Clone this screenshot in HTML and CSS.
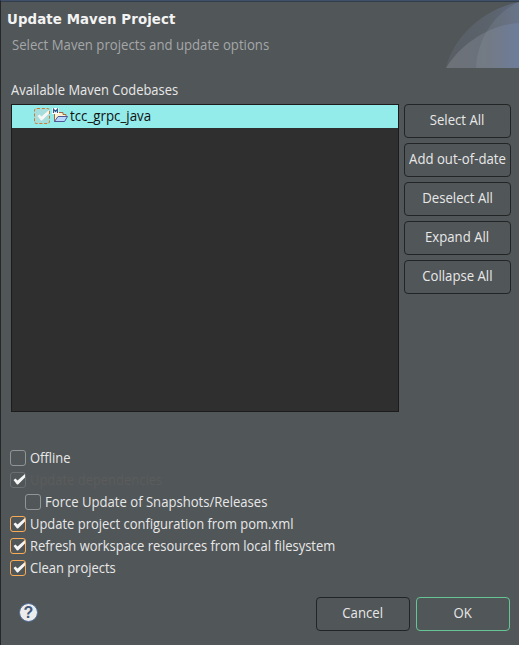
FILE: index.html
```html
<!DOCTYPE html>
<html lang="en">
<head>
<meta charset="utf-8">
<title>Update Maven Project</title>
<link rel="stylesheet" href="styles.css">
</head>
<body>
<main class="dialog">
  <header class="header">
    <div>
      <h1>Update Maven Project</h1>
      <p class="t sub">Select Maven projects and update options</p>
    </div>
    <svg class="banner" width="73" height="66" viewBox="0 0 73 66">
      <defs>
        <linearGradient id="fade" x1="0" x2="1"><stop offset="0" stop-color="#697180" stop-opacity=".3"/><stop offset=".6" stop-color="#6a7589" stop-opacity=".4"/><stop offset="1" stop-color="#6c7fab" stop-opacity=".5"/></linearGradient>
        <linearGradient id="lower" x1="0" x2="1"><stop offset="0" stop-color="#888b91" stop-opacity=".45"/><stop offset=".6" stop-color="#828896" stop-opacity=".4"/><stop offset="1" stop-color="#6f84b5" stop-opacity=".4"/></linearGradient>
      </defs>
      <path fill="url(#fade)" d="M0 66C7 35 37 7 73 0V66Z"/>
      <path fill="url(#lower)" d="M0 66C15 42 43 23 73 21V66Z"/>
      <path fill="#a2adbb" fill-opacity=".15" d="M30 66C31 38 48 11 73 0V66Z"/>
    </svg>
  </header>
  <p class="t label">Available Maven Codebases</p>
  <section class="projects">
    <div class="tree">
      <div class="row">
        <span class="check focus"><svg viewBox="0 0 16 16"><path d="M3.5 8 5.5 6.5 7.5 8.5 15 2V5.5L8 12.5H7Z"/></svg></span>
        <svg class="folder" width="17" height="16" viewBox="0 0 17 16">
          <path d="M2.5 14V5.5H6L7 4.5H11V6.5H14V9" fill="#fff4cf" stroke="#a36742"/>
          <path d="M2.5 13.5 6 8.5H15.5L12.5 13.5Z" fill="#bad8ff" stroke="#4e5797"/>
          <path d="M0 0H7V6H0Z" fill="#fff"/>
          <path d="M1.5 5V1.2L3.5 3.5 5.5 1.2V5" fill="none" stroke="#315b8a" stroke-width="1.2"/>
        </svg>
        <span class="t">tcc_grpc_java</span>
      </div>
    </div>
    <div class="actions">
      <button><span class="t">Select All</span></button>
      <button><span class="t">Add out-of-date</span></button>
      <button><span class="t">Deselect All</span></button>
      <button><span class="t">Expand All</span></button>
      <button><span class="t">Collapse All</span></button>
    </div>
  </section>
  <section class="options">
    <div class="option"><span class="check"></span><span class="t">Offline</span></div>
    <div class="option disabled"><span class="check"><svg viewBox="0 0 16 16"><path d="M3.5 8 5.5 6.5 7.5 8.5 15 2V5.5L8 12.5H7Z"/></svg></span><span class="t">Update dependencies</span></div>
    <div class="option nested"><span class="check"></span><span class="t">Force Update of Snapshots/Releases</span></div>
    <div class="option on"><span class="check"><svg viewBox="0 0 16 16"><path d="M3.5 8 5.5 6.5 7.5 8.5 15 2V5.5L8 12.5H7Z"/></svg></span><span class="t">Update project configuration from pom.xml</span></div>
    <div class="option on"><span class="check"><svg viewBox="0 0 16 16"><path d="M3.5 8 5.5 6.5 7.5 8.5 15 2V5.5L8 12.5H7Z"/></svg></span><span class="t">Refresh workspace resources from local filesystem</span></div>
    <div class="option on"><span class="check"><svg viewBox="0 0 16 16"><path d="M3.5 8 5.5 6.5 7.5 8.5 15 2V5.5L8 12.5H7Z"/></svg></span><span class="t">Clean projects</span></div>
  </section>
  <footer class="footer">
    <span class="help">?</span>
    <button><span class="t">Cancel</span></button>
    <button class="primary"><span class="t">OK</span></button>
  </footer>
</main>
</body>
</html>
```
FILE: styles.css
```css
* { box-sizing: border-box; }
body { margin: 0; background: #515658; color: #e8e8e8; font: 14px/20px "Open Sans", sans-serif; }
.dialog { width: 519px; height: 645px; border-top: 1px solid #40506a; border-left: 1px solid #252729; display: flex; flex-direction: column; overflow: hidden; }
h1, p { margin: 0; }
.t { display: inline-block; white-space: nowrap; transform: scaleX(.925); transform-origin: left; }
.header { height: 67px; display: flex; justify-content: space-between; border-top: 1px solid #343e4b; }
h1 { font: bold 13.33px/16px "DejaVu Sans", sans-serif; letter-spacing: .1px; margin: 10px 0 0 6px; color: #f3f3f3; }
.sub { margin: 7px 0 0 11px; color: #a5a7a8; transform: scaleX(.94); }
.banner { flex: none; }
.label { margin: 12px 0 4px 10px; align-self: flex-start; }
.projects { display: flex; gap: 5px; margin-left: 10px; height: 308px; }
.tree { width: 388px; border: 1px solid #1c1c1c; background: #2f2f2f; }
.row { height: 23px; background: #93ecea; color: #111; display: flex; align-items: center; padding: 0 0 1px 22px; }
.row .t { transform: scaleX(.95); }
.check { flex: none; width: 16px; height: 16px; border: 1px solid #929596; border-radius: 3px; }
.check svg { display: block; width: 16px; height: 16px; margin: -1px; fill: #f6f6f6; }
.focus { border: 1px dashed #c87d35; background: #a5dedd; }
.folder { margin: 0 1px 0 2px; }
.actions { display: grid; grid-template-columns: 107px; grid-auto-rows: 34px; gap: 5px; }
button { display: flex; justify-content: center; align-items: center; padding: 0 0 2px; border: 1px solid #222425; border-radius: 4px; background: #515658; color: #e8e8e8; font: inherit; }
button .t { transform: scaleX(.94); transform-origin: center; }
.options { margin: 35px 0 0 9px; }
.option { height: 22px; display: flex; align-items: center; gap: 4px; }
.nested { margin-left: 15px; }
.nested .t { transform: scaleX(.935); }
.on .check { border-color: #f9ac55; }
.disabled { color: #5c5c5c; }
.disabled .check { border-color: #6b6f71; }
.footer { display: flex; margin: 18px 0 0 18px; padding-right: 9px; height: 34px; gap: 6px; align-items: center; }
.footer button { width: 94px; height: 34px; }
.footer .primary { border-color: #66c595; }
.help { width: 19px; height: 19px; border: 1px solid #526d99; border-radius: 50%; background: #ececec; color: #405a7c; font: bold 16px/17px "Liberation Sans", sans-serif; text-align: center; margin-right: auto; margin-top: -4px; }
```
